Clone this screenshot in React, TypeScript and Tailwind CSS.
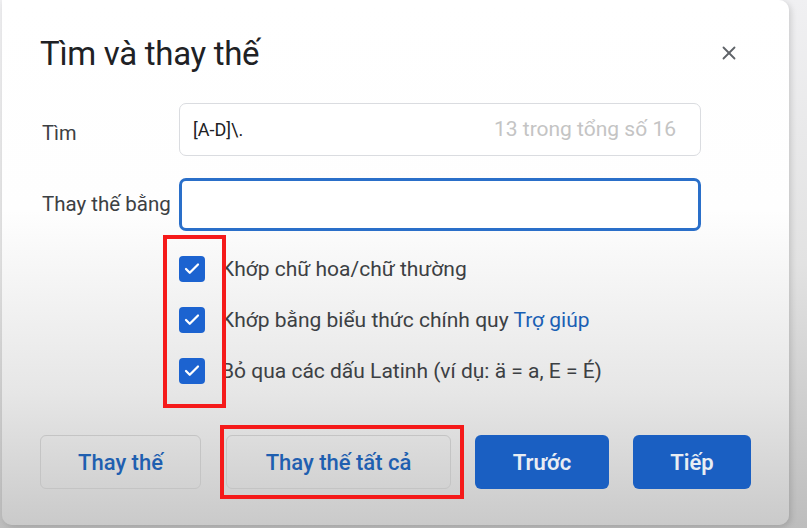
import { X, Check } from 'lucide-react';

const options = [
  { label: 'Khớp chữ hoa/chữ thường' },
  { label: 'Khớp bằng biểu thức chính quy', link: 'Trợ giúp' },
  { label: 'Bỏ qua các dấu Latinh (ví dụ: ä = a, E = É)' },
];

export default function App() {
  return (
    <div
      className="w-[807px] h-[528px] overflow-hidden bg-gradient-to-b from-[#f0f0f2] via-[#e2e2e2] to-[#bdbdbd] pl-[2px]"
      style={{ fontFamily: 'Roboto, "Noto Sans", sans-serif' }}
    >
      <div className="relative w-[787px] h-[525px] rounded-b-[10px] rounded-tr-[10px] bg-[linear-gradient(to_bottom,#ffffff_0%,#fefefe_40%,#e6e6e6_75%,#cacaca_100%)] shadow-[2px_2px_6px_rgba(0,0,0,0.15)] pt-[33px] pl-[38px] pr-[36px]">
        {/* Header */}
        <div className="flex items-center justify-between">
          <h1 className="text-[33px] leading-[42px] text-[#202124] tracking-[-0.3px]">Tìm và thay thế</h1>
          <X size={22} strokeWidth={2} className="text-[#5f6368] mr-[13px] mt-[-2px]" />
        </div>

        {/* Find */}
        <div className="mt-[28px] flex items-center">
          <span className="w-[139px] shrink-0 pl-[2px] pt-[6px] text-[20px] text-[#3c4043]">Tìm</span>
          <div className="w-[522px] h-[53px] rounded-[7px] border border-[#dadce0] bg-white flex items-center justify-between pl-[13px] pr-[24px]">
            <span className="text-[18px] text-[#202124]">[A-D]\.</span>
            <span className="text-[21px] text-[#c4c4c4]">13 trong tổng số 16</span>
          </div>
        </div>

        {/* Replace */}
        <div className="mt-[22px] flex items-center">
          <span className="w-[139px] shrink-0 pl-[2px] text-[20.5px] text-[#3c4043] whitespace-nowrap">Thay thế bằng</span>
          <div className="w-[522px] h-[53px] rounded-[7px] border-[3px] border-[#2a6fc9] bg-white" />
        </div>

        {/* Options */}
        <div className="mt-[25px] ml-[139px] flex flex-col gap-[25px]">
          {options.map((o) => (
            <div key={o.label} className="flex items-center gap-[16px] h-[26px]">
              <div className="w-[26px] h-[26px] rounded-[4px] bg-[#1c63d0] flex items-center justify-center">
                <Check size={18} strokeWidth={3} className="text-white" />
              </div>
              <span className="text-[21px] leading-[26px] text-[#3c4043] whitespace-nowrap">
                {o.label}
                {o.link && <span className="text-[#1a5fb4]"> {o.link}</span>}
              </span>
            </div>
          ))}
        </div>

        {/* Buttons */}
        <div className="mt-[51px] flex items-center">
          <button className="shrink-0 w-[161px] h-[54px] rounded-[6px] border border-[#c4c4c4] text-[22px] font-medium text-[#1f5fb0]">
            Thay thế
          </button>
          <button className="shrink-0 ml-[25px] w-[225px] h-[54px] rounded-[6px] border border-[#c4c4c4] text-[22px] font-medium text-[#1f5fb0]">
            Thay thế tất cả
          </button>
          <button className="shrink-0 ml-[24px] w-[134px] h-[54px] rounded-[6px] bg-[#1a5fc2] text-[22px] font-semibold text-[#e8edf3]">
            Trước
          </button>
          <button className="shrink-0 ml-[24px] w-[118px] h-[54px] rounded-[6px] bg-[#1a5fc2] text-[22px] font-semibold text-[#e8edf3]">
            Tiếp
          </button>
        </div>

        {/* Red highlight overlays */}
        <div className="absolute left-[161px] top-[235px] w-[63px] h-[173px] border-[4px] border-[#f51a1a]" />
        <div className="absolute left-[218px] top-[425px] w-[244px] h-[74px] border-[4px] border-[#f51a1a]" />
      </div>
    </div>
  );
}
